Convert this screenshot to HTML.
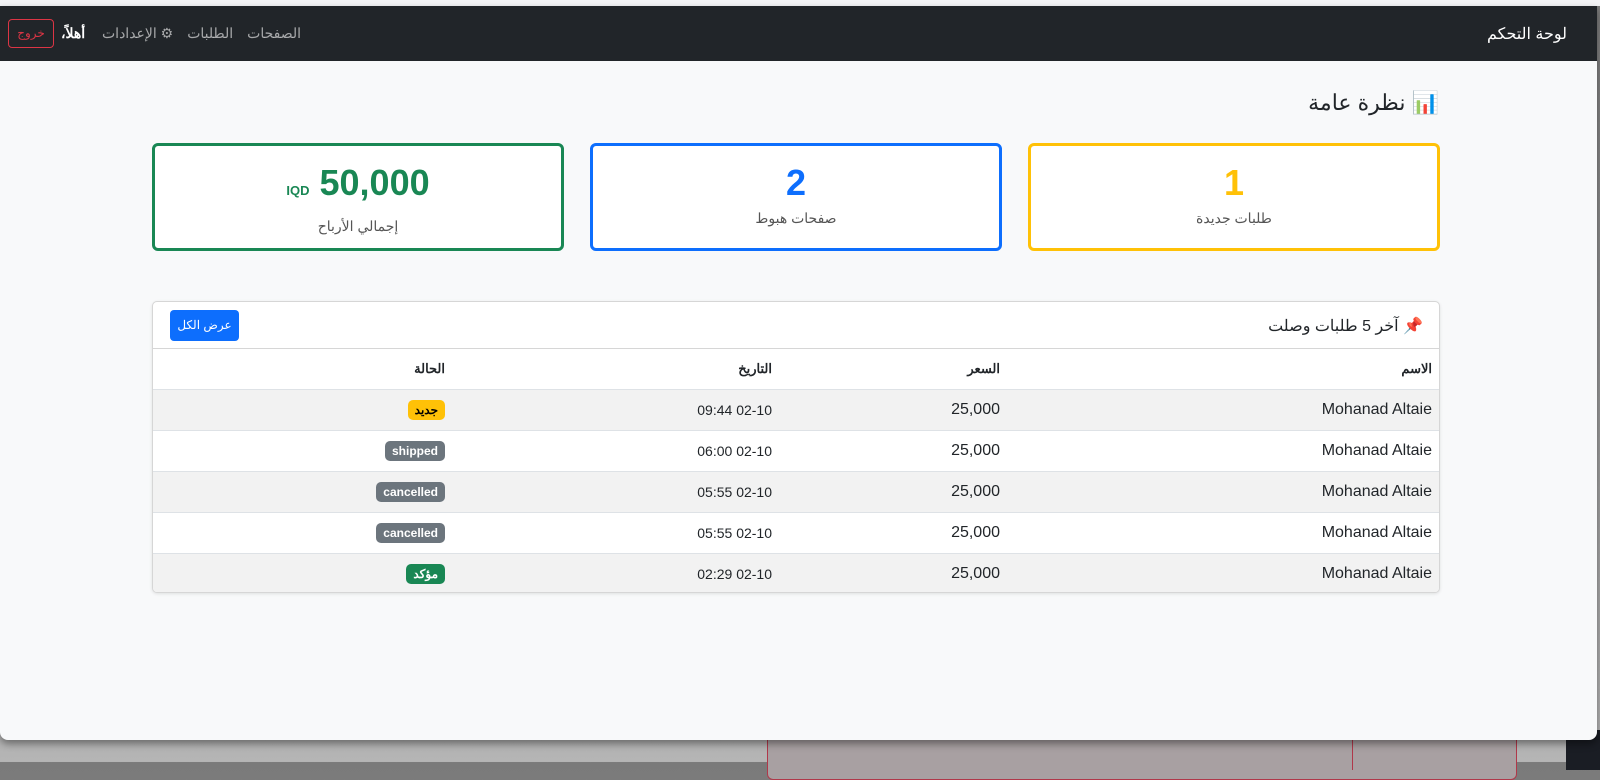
<!DOCTYPE html>
<html lang="ar" dir="rtl"><head><meta charset="utf-8"><style>
*{box-sizing:border-box;margin:0;padding:0}
body{width:1600px;height:762px;overflow:hidden;position:relative;font-family:"Liberation Sans","Noto Sans CJK SC",sans-serif;background:linear-gradient(#7a7a7a,#b5b5b5);}
.topstrip{position:absolute;left:0;top:0;width:1600px;height:6px;background:#f3f4f6}
.redbox{position:absolute;left:767px;top:730px;width:750px;height:50px;border:1px solid #b0384a;border-radius:6px;background:#a8a0a2}
.redline{position:absolute;left:1352px;top:730px;width:1px;height:40px;background:#b0384a}
.dark{position:absolute;left:1566px;top:730px;width:34px;height:40px;background:#1a1d24}
.win{position:absolute;left:0;top:6px;width:1597px;height:734px;background:#f8f9fa;border-radius:0 0 8px 8px;overflow:hidden;box-shadow:0 4px 8px rgba(0,0,0,.4)}
.nav{height:55px;background:#212529;position:relative;color:#fff}
.brand{position:absolute right;right:30px;position:absolute;top:18px;font-size:16px;color:#fff}
.links{position:absolute;left:102px;top:19px;font-size:14px;color:rgba(255,255,255,.6);display:flex;direction:rtl;gap:14px}
.hello{position:absolute;left:61px;top:19px;font-size:14px;font-weight:bold;color:#fff}
.out{position:absolute;left:8px;top:13px;width:46px;height:29px;border:1px solid #dc3545;border-radius:4px;color:#dc3545;font-size:12px;text-align:center;line-height:27px}
h2{position:absolute;right:158px;top:84px;font-size:22px;font-weight:normal;color:#212529}
.card{position:absolute;top:137px;width:412px;height:108px;border:3px solid;border-radius:6px;background:#fff;text-align:center}
.card .n{font-size:36px;font-weight:bold;margin-top:17px;line-height:40px}
.card .l{font-size:14px;color:#555;margin-top:7px}
.tcard{position:absolute;left:152px;top:295px;width:1288px;height:292px;border:1px solid #d6d6d6;border-radius:5px;background:#fff;box-shadow:0 1px 3px rgba(0,0,0,.1);overflow:hidden}
.th{height:47px;border-bottom:1px solid #d6d6d6;position:relative}
.th .t{position:absolute;right:16px;top:14px;font-size:16px;color:#212529}
.btn{position:absolute left;left:17px;position:absolute;top:8px;width:69px;height:31px;background:#0d6efd;color:#fff;border-radius:4px;font-size:12px;text-align:center;line-height:31px}
table{width:100%;border-collapse:collapse;font-size:16px;color:#212529}
td,th{height:41px;border-bottom:1px solid #dee2e6;padding:0 7px;text-align:right;vertical-align:middle}
thead th{font-size:13px;font-weight:bold;height:40px}
tbody tr:nth-child(odd){background:#f2f2f2}
.b{display:inline-block;font-size:12px;font-weight:bold;color:#fff;border-radius:5px;padding:3px 7px}
.d{font-size:14px}
</style></head><body>
<div class="topstrip"></div>
<div class="redbox"></div><div class="redline"></div><div class="dark"></div>
<div class="win">
<div class="nav">
<div class="brand">لوحة التحكم</div>
<div class="links"><span>الصفحات</span><span>الطلبات</span><span>⚙ الإعدادات</span></div>
<div class="hello">أهلاً،</div>
<div class="out">خروج</div>
</div>
<h2>📊 نظرة عامة</h2>
<div class="card" style="left:1028px;border-color:#ffc107"><div class="n" style="color:#ffc107">1</div><div class="l">طلبات جديدة</div></div>
<div class="card" style="left:590px;border-color:#0d6efd"><div class="n" style="color:#0d6efd">2</div><div class="l">صفحات هبوط</div></div>
<div class="card" style="left:152px;border-color:#198754"><div class="n" style="color:#198754">50,000 <span style="font-size:13px">IQD</span></div><div class="l">إجمالي الأرباح</div></div>
<div class="tcard">
<div class="th"><div class="t">📌 آخر 5 طلبات وصلت</div><div class="btn">عرض الكل</div></div>
<table>
<colgroup><col style="width:432px"><col style="width:228px"><col style="width:327px"><col></colgroup>
<thead><tr><th>الاسم</th><th>السعر</th><th>التاريخ</th><th>الحالة</th></tr></thead>
<tbody>
<tr><td>Mohanad Altaie</td><td>25,000</td><td class="d"><span dir="ltr">09:44 02-10</span></td><td><span class="b" style="background:#ffc107;color:#000">جديد</span></td></tr>
<tr><td>Mohanad Altaie</td><td>25,000</td><td class="d"><span dir="ltr">06:00 02-10</span></td><td><span class="b" style="background:#6c757d">shipped</span></td></tr>
<tr><td>Mohanad Altaie</td><td>25,000</td><td class="d"><span dir="ltr">05:55 02-10</span></td><td><span class="b" style="background:#6c757d">cancelled</span></td></tr>
<tr><td>Mohanad Altaie</td><td>25,000</td><td class="d"><span dir="ltr">05:55 02-10</span></td><td><span class="b" style="background:#6c757d">cancelled</span></td></tr>
<tr><td>Mohanad Altaie</td><td>25,000</td><td class="d"><span dir="ltr">02:29 02-10</span></td><td><span class="b" style="background:#198754">مؤكد</span></td></tr>
</tbody></table>
</div>
</div>
</body></html>
